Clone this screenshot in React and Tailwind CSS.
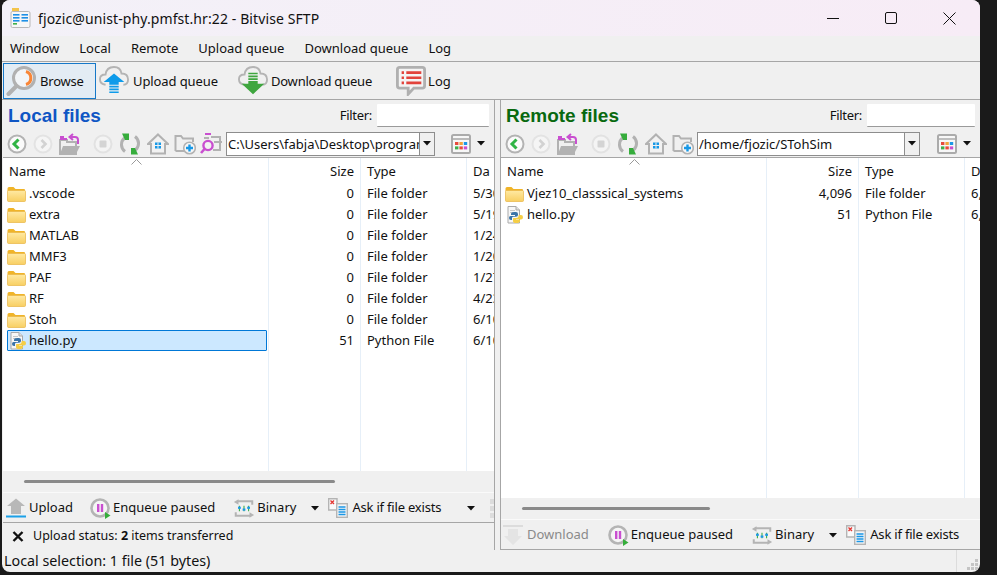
import React from "react";

const Folder = () => (
  <svg width="19" height="16" viewBox="0 0 19 16" className="shrink-0">
    <defs>
      <linearGradient id="fg" x1="0" y1="0" x2="0" y2="1">
        <stop offset="0" stopColor="#ffe9a3" />
        <stop offset="1" stopColor="#f8cf62" />
      </linearGradient>
    </defs>
    <path d="M0.5 2.5 Q0.5 1 2 1 H6.5 L8.5 3 H17 Q18 3 18 4 V5 H0.5 Z" fill="#f0b429" />
    <rect x="0.5" y="4.5" width="18" height="11" rx="1" fill="url(#fg)" stroke="#e8b545" strokeWidth="0.7" />
  </svg>
);

const PyFile = () => (
  <svg width="19" height="18" viewBox="-1 0 19 18" className="shrink-0">
    <path d="M2 0.5 H10 L13.5 4 V17 H2 Z" fill="#f7f7f7" stroke="#a9a9a9" />
    <path d="M10 0.5 V4 H13.5" fill="#e0e0e0" stroke="#a9a9a9" />
    <path d="M4 4.5 H9 M4 6.5 H7" stroke="#c8c8c8" />
    <path d="M8 6 Q5 6 5 8 V9 H9 V10 H4.5 Q3 10 3 12 Q3 14 5 14 H6 V12 Q6 10.8 7.5 10.8 H10 Q12 10.8 12 9 V8 Q12 6 10 6 Z" fill="#3a74a8" />
    <path d="M12.6 9 V10 Q12.6 12 10 12 H7.4 Q7 12 7 13 V15 Q7 17 10 17 Q14 17 14 15 V14 H10 V13.4 H15 Q17 13.4 17 11.2 Q17 9 15 9 Z" fill="#f5ce45" />
  </svg>
);

const Magnifier = () => (
  <svg width="30" height="32" viewBox="0 0 30 32" className="shrink-0">
    <circle cx="18" cy="13" r="10.5" fill="#f2f5f8" stroke="#b1b1b1" strokeWidth="3" />
    <path d="M10.5 21 L2.5 29" stroke="#b1b1b1" strokeWidth="4" strokeLinecap="round" />
    <path d="M20 6.5 A6.8 6.8 0 0 1 20 19.5" fill="none" stroke="#f98637" strokeWidth="3" />
  </svg>
);

const Cloud = ({ children }) => (
  <svg width="30" height="32" viewBox="0 0 32 34" className="shrink-0">
    <path d="M7 21 Q1 20 1 15 Q1 10 7 10 Q8 2 16 2 Q23 2 24 9 Q31 9 31 15.5 Q31 21 26 21" fill="none" stroke="#b4b4b4" strokeWidth="2" />
    {children}
  </svg>
);

const UploadCloud = () => (
  <Cloud>
    <path d="M16 9 L27 18 H21 V21 H11 V18 H5 Z" fill="#0e9bea" />
    <path d="M11 23 H21 M11 26 H21 M11 29 H21" stroke="#0e9bea" strokeWidth="1.8" />
  </Cloud>
);

const DownloadCloud = () => (
  <Cloud>
    <path d="M11 9 H21 M11 12 H21 M11 15 H21" stroke="#3fa63f" strokeWidth="1.8" />
    <path d="M11 17 H21 V20 H28 L16 31 L4 20 H11 Z" fill="#3fa63f" />
  </Cloud>
);

const LogIcon = () => (
  <svg width="30" height="30" viewBox="0 0 32 32" className="shrink-0">
    <path d="M4 1.5 H28 Q30.5 1.5 30.5 4 V21 Q30.5 23.5 28 23.5 H19 L13 30 V23.5 H4 Q1.5 23.5 1.5 21 V4 Q1.5 1.5 4 1.5 Z" fill="#f4f4f4" stroke="#b0b0b0" strokeWidth="3" />
    <path d="M6 7 H8.5 M11 7 H27 M6 12.5 H8.5 M11 12.5 H27 M6 18 H8.5 M11 18 H27" stroke="#e2433c" strokeWidth="2.8" />
  </svg>
);

const Back = () => (
  <svg width="20" height="20" viewBox="0 0 20 20" className="shrink-0">
    <circle cx="10" cy="10" r="8.5" fill="#fafafa" stroke="#b3b3b3" strokeWidth="2" />
    <path d="M11.5 5.5 L7 10 L11.5 14.5" fill="none" stroke="#2fb344" strokeWidth="3" />
  </svg>
);

const Forward = () => (
  <svg width="20" height="20" viewBox="0 0 20 20" className="shrink-0">
    <circle cx="10" cy="10" r="8.5" fill="#f5f5f5" stroke="#e3e3e3" strokeWidth="2" />
    <path d="M8.5 6 L12.5 10 L8.5 14" fill="none" stroke="#d2d2d2" strokeWidth="2.6" />
  </svg>
);

const FolderUp = () => (
  <svg width="22" height="22" viewBox="0 0 22 22" className="shrink-0">
    <path d="M1 21 V7 H8 V9 H17 V21 Z" fill="none" stroke="#b2b2b2" strokeWidth="2" />
    <path d="M1 21 L4 13 H21 L17 21 Z" fill="#b2b2b2" />
    <path d="M1 4 H5 M1 6 H8" stroke="#c94fd0" strokeWidth="2" />
    <path d="M11 4 H16 Q19 4 19 7 V11" fill="none" stroke="#c94fd0" strokeWidth="2" />
    <path d="M14 1 L10.5 4 L14 7" fill="none" stroke="#c94fd0" strokeWidth="2" />
  </svg>
);

const Stop = () => (
  <svg width="20" height="20" viewBox="0 0 20 20" className="shrink-0">
    <circle cx="10" cy="10" r="8.5" fill="#f4f4f4" stroke="#e2e2e2" strokeWidth="2" />
    <rect x="6.5" y="6.5" width="7" height="7" rx="1" fill="#d4d4d4" />
  </svg>
);

const Refresh = () => (
  <svg width="22" height="22" viewBox="0 0 22 22" className="shrink-0">
    <path d="M5.5 5 A8.6 8.6 0 0 0 6 18.5" fill="none" stroke="#b2b2b2" strokeWidth="3" />
    <path d="M16.5 17 A8.6 8.6 0 0 0 16 3.5" fill="none" stroke="#b2b2b2" strokeWidth="3" />
    <path d="M3 0.5 H10 V7 H6 Z" fill="#36ad3c" />
    <path d="M12 15 H16 L19 21.5 H12 Z" fill="#36ad3c" />
  </svg>
);

const Home = () => (
  <svg width="22" height="22" viewBox="0 0 22 22" className="shrink-0">
    <path d="M11 1.5 L21 11 H18 V20.5 H4 V11 H1 Z" fill="#f2f2f2" stroke="#b2b2b2" strokeWidth="2" />
    <rect x="8" y="9.5" width="6" height="6" fill="#1798e6" />
    <path d="M11 9.5 V15.5 M8 12.5 H14" stroke="#f2f2f2" />
  </svg>
);

const FolderPlus = () => (
  <svg width="22" height="22" viewBox="0 0 22 22" className="shrink-0 -ml-px">
    <path d="M1.5 18 V3 H7 L9 5.5 H19 V9" fill="none" stroke="#b2b2b2" strokeWidth="2" />
    <path d="M1.5 18 H10" stroke="#b2b2b2" strokeWidth="2" />
    <circle cx="15.5" cy="15" r="5.8" fill="#f7f7f7" stroke="#b2b2b2" strokeWidth="1.6" />
    <path d="M12 15 H19 M15.5 11.5 V18.5" stroke="#1798e6" strokeWidth="2.4" />
  </svg>
);

const FolderSearch = () => (
  <svg width="22" height="22" viewBox="0 0 22 22" className="shrink-0 -ml-[2px]">
    <path d="M5 1 H11" stroke="#c94fd0" strokeWidth="2" />
    <path d="M11 4 H20 V17 H13" fill="none" stroke="#b2b2b2" strokeWidth="2" />
    <path d="M4 5 H9 M14 9 H22" stroke="#b2b2b2" strokeWidth="2" />
    <circle cx="8" cy="12.5" r="4.6" fill="#f2f2f2" stroke="#c94fd0" strokeWidth="2.4" />
    <path d="M4.5 16 L1 20" stroke="#c94fd0" strokeWidth="2.6" />
  </svg>
);

const ViewIcon = () => (
  <svg width="20" height="20" viewBox="0 0 20 20" className="shrink-0">
    <rect x="1" y="1" width="18" height="18" rx="1.5" fill="#f7f7f7" stroke="#ababab" strokeWidth="2" />
    <path d="M1 5 H19" stroke="#ababab" strokeWidth="1.6" />
    <rect x="4" y="8" width="3.4" height="3" fill="#e74b3c" />
    <rect x="8.4" y="8" width="3.4" height="3" fill="#f2a33a" />
    <rect x="12.8" y="8" width="3.4" height="3" fill="#1b97e6" />
    <rect x="4" y="12.4" width="3.4" height="3" fill="#3fae49" />
    <rect x="8.4" y="12.4" width="3.4" height="3" fill="#e74b3c" />
    <rect x="12.8" y="12.4" width="3.4" height="3" fill="#c94fd0" />
  </svg>
);

const Caret = ({ className = "" }) => (
  <svg width="9" height="5" viewBox="0 0 9 5" className={`shrink-0 ${className}`}>
    <path d="M0 0 H8 L4 4.5 Z" fill="#111" />
  </svg>
);

const UploadBtn = () => (
  <svg width="20" height="20" viewBox="0 0 20 20" className="shrink-0">
    <path d="M10 0.5 L19 8 H15 V16 H5 V8 H1 Z" fill="#b8b8b8" />
    <path d="M0 18.5 H20" stroke="#1ba1e8" strokeWidth="2" />
  </svg>
);

const DownloadBtn = () => (
  <svg width="20" height="21" viewBox="0 0 20 21" className="shrink-0">
    <path d="M0 1 H20" stroke="#dcdcdc" strokeWidth="2" />
    <path d="M5 4 H15 V11 H19 L10 20 L1 11 H5 Z" fill="#e4e4e4" />
  </svg>
);

const Paused = () => (
  <svg width="21" height="21" viewBox="0 0 21 21" className="shrink-0">
    <circle cx="10" cy="10" r="8.5" fill="#f5f5f5" stroke="#b4b4b4" strokeWidth="2.6" />
    <rect x="7" y="6" width="2.4" height="8" fill="#c94fd0" />
    <rect x="10.8" y="6" width="2.4" height="8" fill="#c94fd0" />
    <path d="M15 14 L20.5 17.5 L15 21 Z" fill="#35ad3a" />
  </svg>
);

const BinaryIcon = () => (
  <svg width="22" height="21" viewBox="0 0 24 22" className="shrink-0">
    <path d="M6 1 L1 4 L6 7 Z" fill="#b4b4b4" />
    <path d="M5 3 H21 V7" fill="none" stroke="#b4b4b4" strokeWidth="2.2" />
    <path d="M18 21 L23 18 L18 15 Z" fill="#b4b4b4" />
    <path d="M3 15 V19 H19" fill="none" stroke="#b4b4b4" strokeWidth="2.2" />
    <path d="M7 8 V14 M12 8 V14 M17 8 V14" stroke="#3fae49" strokeWidth="1.2" />
    <rect x="5.5" y="9" width="3" height="2.4" fill="#1b97e6" />
    <rect x="10.5" y="11" width="3" height="2.4" fill="#1b97e6" />
    <rect x="15.5" y="9" width="3" height="2.4" fill="#1b97e6" />
  </svg>
);

const AskIcon = () => (
  <svg width="20" height="20" viewBox="0 0 20 20" className="shrink-0">
    <path d="M0.7 0.7 H9 V12 H0.7 Z" fill="#fafafa" stroke="#b4b4b4" strokeWidth="1.4" />
    <path d="M2.5 2.5 L6 6 M6 2.5 L2.5 6" stroke="#e53a35" strokeWidth="1.4" />
    <rect x="8.7" y="5.7" width="10.6" height="13.6" fill="#f5f5f5" stroke="#b4b4b4" strokeWidth="1.4" />
    <path d="M10.5 9 H17.5 M10.5 11.5 H17.5 M10.5 14 H17.5 M10.5 16.5 H17.5" stroke="#1b97e6" strokeWidth="1.5" />
  </svg>
);

const AppIcon = () => (
  <svg width="22" height="22" viewBox="0 0 22 22" className="shrink-0">
    <path d="M2 1 H9 V5 H2 Z" fill="#f3c44c" />
    <rect x="1" y="4.5" width="19" height="16" rx="1.5" fill="#f7f7f7" stroke="#b8b8b8" />
    <rect x="3" y="7" width="6.5" height="1.6" fill="#1e90e6" />
    <rect x="11.5" y="7" width="6.5" height="1.6" fill="#1e90e6" />
    <rect x="3" y="10" width="6.5" height="1.6" fill="#1e90e6" />
    <rect x="11.5" y="10" width="6.5" height="1.6" fill="#1e90e6" />
    <rect x="3" y="13" width="6.5" height="1.6" fill="#1e90e6" />
    <rect x="11.5" y="13" width="6.5" height="1.6" fill="#1e90e6" />
    <rect x="3" y="16" width="4" height="1.6" fill="#3fae49" />
  </svg>
);

const localRows = [
  [".vscode", "0", "File folder", "5/30"],
  ["extra", "0", "File folder", "5/19"],
  ["MATLAB", "0", "File folder", "1/24"],
  ["MMF3", "0", "File folder", "1/20"],
  ["PAF", "0", "File folder", "1/27"],
  ["RF", "0", "File folder", "4/23"],
  ["Stoh", "0", "File folder", "6/10"],
  ["hello.py", "51", "Python File", "6/10", true],
];

const remoteRows = [
  ["Vjez10_classsical_systems", "4,096", "File folder", "6,"],
  ["hello.py", "51", "Python File", "6,", true],
];

function FileTable({ rows, selected, date, thumb }) {
  return (
    <div className="flex flex-col flex-1 min-h-0">
      <div className="flex flex-1 min-h-0 bg-white overflow-hidden">
        <div className="relative border-r border-[#e6eff8] shrink-0 w-[266px]">
          <svg width="11" height="6" viewBox="0 0 11 6" className="absolute left-[128px] top-[1px]">
            <path d="M0.5 5.5 L5.5 0.5 L10.5 5.5" fill="none" stroke="#9a9a9a" />
          </svg>
          <div className="h-[25px] pl-[6px] pt-[2px] flex items-center text-[#111]">Name</div>
          {rows.map((r, i) => {
            const sel = selected && r[4];
            return (
              <div
                key={i}
                className={`h-[21px] flex items-center ${sel ? "ml-[4px] mr-[1px] gap-[2px] border border-[#0078d7] bg-[#cce8ff] rounded-[1px]" : "pl-[4px] gap-[3px]"}`}
              >
                {r[4] ? <PyFile /> : <Folder />}
                <span className="text-[#111] whitespace-nowrap">{r[0]}</span>
              </div>
            );
          })}
        </div>
        <div className="border-r border-[#e6eff8] shrink-0 w-[92px]">
          <div className="h-[25px] pr-[6px] pt-[2px] flex items-center justify-end text-[#111]">Size</div>
          {rows.map((r, i) => (
            <div key={i} className="h-[21px] pr-[6px] flex items-center justify-end text-[#111]">{r[1]}</div>
          ))}
        </div>
        <div className="border-r border-[#e6eff8] shrink-0 w-[106px]">
          <div className="h-[25px] pl-[6px] pt-[2px] flex items-center text-[#111]">Type</div>
          {rows.map((r, i) => (
            <div key={i} className="h-[21px] pl-[6px] flex items-center text-[#111] whitespace-nowrap">{r[2]}</div>
          ))}
        </div>
        <div className="flex-1 min-w-0 overflow-hidden">
          <div className="h-[25px] pl-[6px] pt-[2px] flex items-center text-[#111] whitespace-nowrap">{date}</div>
          {rows.map((r, i) => (
            <div key={i} className="h-[21px] pl-[6px] flex items-center text-[#111] whitespace-nowrap">{r[3]}</div>
          ))}
        </div>
      </div>
      <div className="h-[21px] shrink-0 bg-[#f0f0f0] flex items-center pl-[21px]">
        <div className={`h-[3px] bg-[#8a8a8a] rounded-full ${thumb}`} />
      </div>
    </div>
  );
}

function Panel({ title, titleColor, path, pathClass, search, children, filterClass }) {
  return (
    <div className="flex flex-col h-full min-w-0">
      <div className="h-[30px] shrink-0 flex items-center pl-[5px] pr-[5px]">
        <span className={`font-["Liberation_Sans"] font-bold text-[19px] mt-[2px] ${titleColor}`}>{title}</span>
        <span className="ml-auto text-[#111] mt-[2px] tracking-[-0.3px]">Filter:</span>
        <div className={`h-[23px] bg-white border-b border-[#9a9a9a] rounded-[1px] ml-[5px] ${filterClass}`} />
      </div>
      <div className="h-[28px] shrink-0 flex items-center pl-[4px] pr-[8px] border-b border-[#a6a6a6]">
        <div className="flex items-center gap-[6px]">
          <Back />
          <Forward />
          <FolderUp />
        </div>
        <div className="flex items-center gap-[6px] ml-[12px]">
          <Stop />
          <Refresh />
          <Home />
          <FolderPlus />
          {search && <FolderSearch />}
        </div>
        <div className={`h-[24px] border border-[#8d8d8d] bg-white flex items-stretch shrink-0 ${pathClass}`}>
          <span className="flex-1 min-w-0 overflow-hidden whitespace-nowrap px-[1px] leading-[22px] text-[#111]">{path}</span>
          <span className="w-[15px] bg-[#f0f0f0] border-l border-[#8d8d8d] flex items-center justify-center">
            <Caret />
          </span>
        </div>
        <div className="ml-auto flex items-center gap-[6px]">
          <ViewIcon />
          <Caret />
        </div>
      </div>
      {children}
    </div>
  );
}

function TransferBar({ first, firstText, firstClass, pausedClass, padClass, showDots }) {
  return (
    <div className={`h-[29px] pt-px shrink-0 flex items-center text-[#111] whitespace-nowrap overflow-hidden ${padClass}`}>
      {first}
      <span className={firstClass}>{firstText}</span>
      <span className={pausedClass}><Paused /></span>
      <span className="ml-[2px]">Enqueue paused</span>
      <span className="ml-[18px]"><BinaryIcon /></span>
      <span className="ml-[2px]">Binary</span>
      <Caret className="ml-[15px]" />
      <span className="ml-[8px]"><AskIcon /></span>
      <span className="ml-[4px] tracking-[-0.2px]">Ask if file exists</span>
      {showDots && (
        <>
          <Caret className="ml-[26px]" />
          <span className="ml-[14px] flex flex-col gap-[2px]">
            <span className="block w-[5px] h-[5px] bg-[#dcdcdc]" />
            <span className="block w-[5px] h-[5px] bg-[#dcdcdc]" />
            <span className="block w-[5px] h-[5px] bg-[#dcdcdc]" />
          </span>
        </>
      )}
    </div>
  );
}

export default function App() {
  return (
    <div className="w-[997px] h-[575px] pl-[2px] bg-[#1a1a1a] overflow-hidden font-['Noto_Sans',sans-serif] text-[13px]">
      <div className="w-[978px] h-[572px] bg-[#f0f0f0] rounded-[8px] overflow-hidden flex flex-col">
        <div className="h-[36px] shrink-0 flex items-center pl-[8px] pr-[2px] bg-gradient-to-r from-[#f3f1f8] to-[#f7ecf6]">
          <AppIcon />
          <span className="ml-[6px] text-[14px] text-[#111] tracking-[0.1px]">fjozic@unist-phy.pmfst.hr:22 - Bitvise SFTP</span>
          <div className="ml-auto flex items-center">
            <div className="w-[58px] h-[36px] flex items-center justify-center">
              <div className="w-[12px] h-px bg-[#111]" />
            </div>
            <div className="w-[58px] h-[36px] flex items-center justify-center">
              <div className="w-[12px] h-[12px] border border-[#111] rounded-[2px]" />
            </div>
            <div className="w-[58px] h-[36px] flex items-center justify-center">
              <svg width="13" height="13" viewBox="0 0 13 13"><path d="M0.5 0.5 L12.5 12.5 M12.5 0.5 L0.5 12.5" stroke="#111" /></svg>
            </div>
          </div>
        </div>

        <div className="h-[26px] shrink-0 flex items-center gap-[20px] pl-[8px] border-b border-[#a6a6a6] text-[#111]">
          <span>Window</span>
          <span>Local</span>
          <span>Remote</span>
          <span>Upload queue</span>
          <span>Download queue</span>
          <span>Log</span>
        </div>

        <div className="h-[38px] shrink-0 flex items-center pl-px border-b border-[#a6a6a6] text-[#111]">
          <div className="w-[93px] h-[36px] flex items-center gap-[4px] pl-[2px] bg-[#e3ecf4] border border-[#1678c8]">
            <Magnifier />
            <span className="mt-[2px] tracking-[-0.2px]">Browse</span>
          </div>
          <div className="flex items-center gap-[4px] ml-[3px]"><UploadCloud /><span className="mt-[2px] tracking-[-0.1px]">Upload queue</span></div>
          <div className="flex items-center gap-[3px] ml-[20px]"><DownloadCloud /><span className="mt-[2px] tracking-[-0.2px]">Download queue</span></div>
          <div className="flex items-center gap-[2px] ml-[24px]"><LogIcon /><span className="mt-[2px]">Log</span></div>
        </div>

        <div className="flex-1 min-h-0 flex pl-px">
          <div className="w-[492px] shrink-0 border-r border-[#a6a6a6] h-full">
            <Panel
              title="Local files"
              titleColor="text-[#0f56c4]"
              path="C:\Users\fabja\Desktop\program"
              pathClass="w-[209px] ml-[4px]"
              search
              filterClass="w-[112px]"
            >
              <FileTable rows={localRows} selected date="Da" thumb="w-[311px]" />
              <div className="shrink-0 border-b border-[#a6a6a6] border-t border-t-[#fafafa]">
                <TransferBar
                  first={<UploadBtn />}
                  firstText="Upload"
                  firstClass="ml-[3px] text-[#111]"
                  pausedClass="ml-[17px]"
                  padClass="pl-[3px]"
                  showDots
                />
              </div>
              <div className="h-[27px] pb-px shrink-0 flex items-center pl-[9px] text-[#111]">
                <svg width="12" height="11" viewBox="0 0 12 11" className="shrink-0"><path d="M1.5 1 L10.5 10 M10.5 1 L1.5 10" stroke="#111" strokeWidth="2.4" /></svg>
                <span className="ml-[9px] text-[12.5px]">Upload status: <b>2</b> items transferred</span>
              </div>
            </Panel>
          </div>
          <div className="w-[5px] shrink-0" />
          <div className="flex-1 min-w-0 border-l border-[#a6a6a6] h-full">
            <Panel
              title="Remote files"
              titleColor="text-[#08690f]"
              path="/home/fjozic/STohSim"
              pathClass="w-[223px] ml-[3px]"
              filterClass="w-[108px]"
            >
              <FileTable rows={remoteRows} date="D" thumb="w-[188px]" />
              <div className="shrink-0 border-t border-t-[#fafafa] border-b border-[#a6a6a6]">
                <TransferBar
                  first={<DownloadBtn />}
                  firstText="Download"
                  firstClass="ml-[4px] text-[#8a8a8a]"
                  pausedClass="ml-[19px]"
                  padClass="pl-[2px]"
                />
              </div>
            </Panel>
          </div>
        </div>

        <div className="h-[22px] shrink-0 flex items-center pl-[2px] text-[#111]">
          <span className="text-[14.3px]">Local selection: 1 file (51 bytes)</span>
          <div className="ml-auto h-full w-[24px] border-l border-[#dcdcdc] flex items-end justify-end pr-[1px] pb-[1px]">
            <svg width="12" height="12" viewBox="0 0 12 12">
              <path d="M8 0 h3 v3 h-3z M4 4 h3 v3 h-3z M8 4 h3 v3 h-3z M0 8 h3 v3 h-3z M4 8 h3 v3 h-3z M8 8 h3 v3 h-3z" fill="#c4c4c4" />
            </svg>
          </div>
        </div>
      </div>
    </div>
  );
}
